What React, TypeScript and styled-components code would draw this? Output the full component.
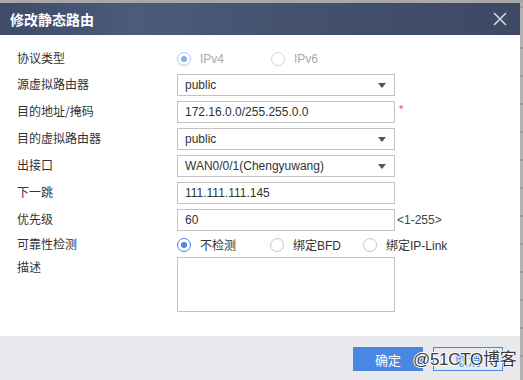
import React from "react";
import styled, { createGlobalStyle, css } from "styled-components";

const GlobalStyle = createGlobalStyle`
  html, body { margin: 0; padding: 0; background: #aaaaaa; }
  body { font-family: "Liberation Sans", "Noto Sans CJK SC", Arial, sans-serif; color: #333; }
  * { box-sizing: border-box; }
`;

const Page = styled.div`
  width: 523px;
  height: 380px;
  overflow: hidden;
  display: flex;
  flex-direction: column;
  background: #aaaaaa;
`;

const TopStrip = styled.div`
  height: 3px;
  flex: none;
  background: #a8a8a8;
`;

const Main = styled.div`
  flex: 1;
  display: flex;
  min-height: 0;
`;

const Dialog = styled.div`
  width: 520px;
  flex: none;
  display: flex;
  flex-direction: column;
  background: #fff;
`;

const SideStrip = styled.div`
  flex: 1;
  background: repeating-linear-gradient(
    180deg,
    #b3b3b3 0px,
    #b3b3b3 26px,
    #9c9c9c 26px,
    #9c9c9c 28px
  );
  background-position: 0 18px;
`;

const Header = styled.div`
  height: 32px;
  flex: none;
  display: flex;
  align-items: center;
  justify-content: space-between;
  padding: 0 13px 0 10px;
  background: linear-gradient(90deg, #3f4a67 0%, #4b5b7c 26%, #44526f 55%, #3d4864 100%);
`;

const Title = styled.div`
  color: #fff;
  font-size: 14px;
  font-weight: bold;
  font-family: "Noto Sans CJK SC", sans-serif;
`;

const CloseButton = styled.button`
  border: 0;
  padding: 0;
  background: transparent;
  width: 14px;
  height: 14px;
  display: flex;
  cursor: pointer;
`;

const Body = styled.div`
  flex: 1;
  display: flex;
  flex-direction: column;
  gap: 5px;
  padding: 14px 0 0 17px;
`;

const Row = styled.div<{ $h: number; $top?: boolean }>`
  display: grid;
  grid-template-columns: 160px 218px auto;
  align-items: ${(p) => (p.$top ? "start" : "center")};
  height: ${(p) => p.$h}px;
`;

const Label = styled.div<{ $pt?: number }>`
  font-family: "Noto Sans CJK SC", sans-serif;
  font-size: 12px;
  line-height: 14px;
  color: #333;
  padding-top: ${(p) => p.$pt ?? 0}px;
  margin-top: -2px;
`;

const fieldBase = css`
  height: 22px;
  width: 218px;
  border: 1px solid #c3c3c3;
  background: #fff;
  font-size: 12px;
  color: #333;
  padding: 0 7px;
  display: flex;
  align-items: center;
`;

const Field = styled.div`
  ${fieldBase}
`;

const SelectBox = styled.div`
  ${fieldBase}
  justify-content: space-between;
  padding-right: 8px;
  &::after {
    content: "";
    border-left: 4px solid transparent;
    border-right: 4px solid transparent;
    border-top: 5px solid #555;
  }
`;

const TextArea = styled.div`
  width: 218px;
  height: 55px;
  border: 1px solid #c3c3c3;
  background: #fff;
`;

const Suffix = styled.div<{ $red?: boolean }>`
  font-size: ${(p) => (p.$red ? "11px" : "12px")};
  color: ${(p) => (p.$red ? "#ec3b6a" : "#444")};
  padding-left: ${(p) => (p.$red ? "4px" : "2px")};
  margin-top: ${(p) => (p.$red ? "-6px" : "0")};
`;

const RadioGroup = styled.div`
  grid-column: 2 / -1;
  display: flex;
  align-items: center;
`;

const RadioItem = styled.label<{ $w: number; $disabled?: boolean }>`
  display: flex;
  align-items: center;
  width: ${(p) => p.$w}px;
  flex: none;
  gap: 9px;
  font-size: 12px;
  font-family: "Liberation Sans", "Noto Sans CJK SC", sans-serif;
  color: ${(p) => (p.$disabled ? "#a9a9a9" : "#333")};
  white-space: nowrap;
`;

const RadioCircle = styled.span<{ $checked?: boolean; $disabled?: boolean }>`
  width: 14px;
  height: 14px;
  border-radius: 50%;
  flex: none;
  display: flex;
  align-items: center;
  justify-content: center;
  background: #fff;
  border: 1px solid
    ${(p) =>
      p.$checked ? (p.$disabled ? "#a9c3ef" : "#4a86e4") : p.$disabled ? "#d6d6d6" : "#c6c6c6"};
  &::after {
    content: "";
    width: 6px;
    height: 6px;
    border-radius: 50%;
    background: ${(p) => (p.$disabled ? "#8db0ea" : "#4a86e4")};
    display: ${(p) => (p.$checked ? "block" : "none")};
  }
`;

const Footer = styled.div`
  height: 44px;
  flex: none;
  background: #e8e9ec;
  display: flex;
  justify-content: flex-end;
  align-items: flex-start;
  gap: 10px;
  padding: 11px 17px 0 0;
  position: relative;
`;

const Button = styled.button<{ $primary?: boolean }>`
  width: 70px;
  height: 24px;
  font-family: "Noto Sans CJK SC", sans-serif;
  font-size: 13px;
  border: 1px solid #4a86e4;
  background: ${(p) => (p.$primary ? "#4a86e4" : "transparent")};
  color: ${(p) => (p.$primary ? "#fff" : "#4a86e4")};
  padding: 0;
  cursor: pointer;
`;

const Watermark = styled.div`
  position: absolute;
  left: 413px;
  top: 14px;
  white-space: nowrap;
  font-family: "Liberation Sans", "Noto Sans CJK SC", sans-serif;
  font-size: 17px;
  line-height: 20px;
  color: #3a3a3a;
  letter-spacing: -0.3px;
  text-shadow: 1px 0 0 #fff, -1px 0 0 #fff, 0 1px 0 #fff, 0 -1px 0 #fff;
  pointer-events: none;
`;

const Radio: React.FC<{ label: string; w: number; checked?: boolean; disabled?: boolean }> = ({
  label,
  w,
  checked,
  disabled,
}) => (
  <RadioItem $w={w} $disabled={disabled}>
    <RadioCircle $checked={checked} $disabled={disabled} />
    {label}
  </RadioItem>
);

export default function App() {
  return (
    <>
      <GlobalStyle />
      <Page>
        <TopStrip />
        <Main>
          <Dialog>
            <Header>
              <Title>修改静态路由</Title>
              <CloseButton aria-label="关闭">
                <svg width="14" height="14" viewBox="0 0 14 14">
                  <path d="M1 1 L13 13 M13 1 L1 13" stroke="#d3d7de" strokeWidth="1.6" />
                </svg>
              </CloseButton>
            </Header>
            <Body>
              <Row $h={20}>
                <Label>协议类型</Label>
                <RadioGroup>
                  <Radio label="IPv4" w={94} checked disabled />
                  <Radio label="IPv6" w={80} disabled />
                </RadioGroup>
              </Row>
              <Row $h={22}>
                <Label>源虚拟路由器</Label>
                <SelectBox>public</SelectBox>
              </Row>
              <Row $h={22}>
                <Label>目的地址/掩码</Label>
                <Field>172.16.0.0/255.255.0.0</Field>
                <Suffix $red>*</Suffix>
              </Row>
              <Row $h={22}>
                <Label>目的虚拟路由器</Label>
                <SelectBox>public</SelectBox>
              </Row>
              <Row $h={22}>
                <Label>出接口</Label>
                <SelectBox>WAN0/0/1(Chengyuwang)</SelectBox>
              </Row>
              <Row $h={22}>
                <Label>下一跳</Label>
                <Field>111.111.111.145</Field>
              </Row>
              <Row $h={22}>
                <Label>优先级</Label>
                <Field>60</Field>
                <Suffix>&lt;1-255&gt;</Suffix>
              </Row>
              <Row $h={16}>
                <Label>可靠性检测</Label>
                <RadioGroup>
                  <Radio label="不检测" w={93} checked />
                  <Radio label="绑定BFD" w={93} />
                  <Radio label="绑定IP-Link" w={110} />
                </RadioGroup>
              </Row>
              <Row $h={55} $top>
                <Label $pt={5}>描述</Label>
                <TextArea />
              </Row>
            </Body>
            <Footer>
              <Button $primary>确定</Button>
              <Button>取消</Button>
              <Watermark>@51CTO博客</Watermark>
            </Footer>
          </Dialog>
          <SideStrip />
        </Main>
      </Page>
    </>
  );
}
